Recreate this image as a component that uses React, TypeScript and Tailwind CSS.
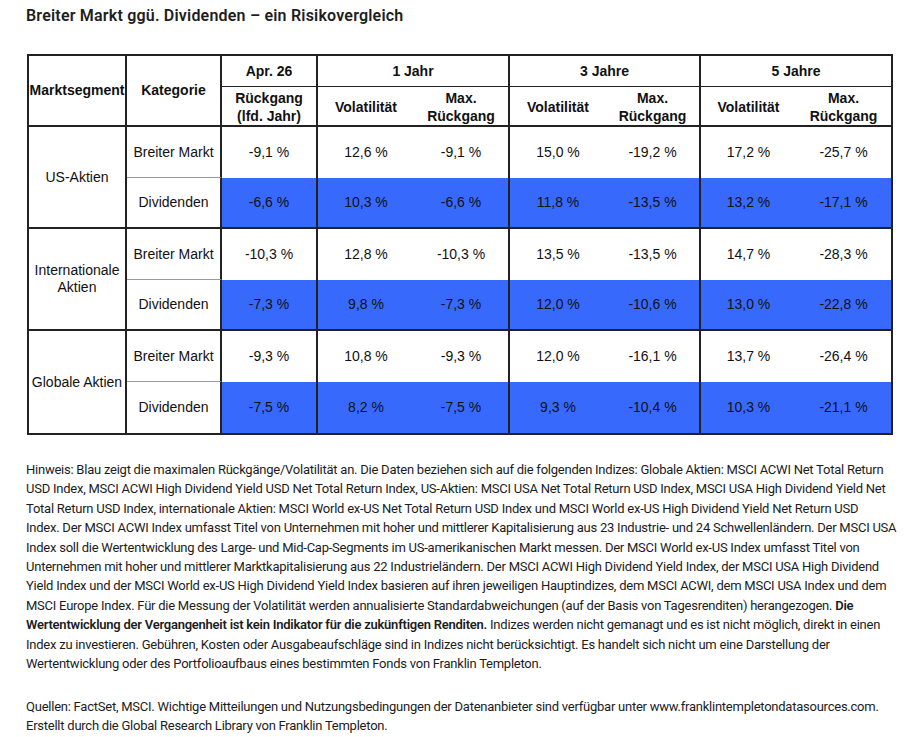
import React from "react";

const BLUE = "bg-[#3869fd]";

type Group = {
  seg: string[];
  breit: string[];
  div: string[];
};

const groups: Group[] = [
  {
    seg: ["US-Aktien"],
    breit: ["-9,1 %", "12,6 %", "-9,1 %", "15,0 %", "-19,2 %", "17,2 %", "-25,7 %"],
    div: ["-6,6 %", "10,3 %", "-6,6 %", "11,8 %", "-13,5 %", "13,2 %", "-17,1 %"],
  },
  {
    seg: ["Internationale", "Aktien"],
    breit: ["-10,3 %", "12,8 %", "-10,3 %", "13,5 %", "-13,5 %", "14,7 %", "-28,3 %"],
    div: ["-7,3 %", "9,8 %", "-7,3 %", "12,0 %", "-10,6 %", "13,0 %", "-22,8 %"],
  },
  {
    seg: ["Globale Aktien"],
    breit: ["-9,3 %", "10,8 %", "-9,3 %", "12,0 %", "-16,1 %", "13,7 %", "-26,4 %"],
    div: ["-7,5 %", "8,2 %", "-7,5 %", "9,3 %", "-10,4 %", "10,3 %", "-21,1 %"],
  },
];

const rightBorder = [true, false, true, false, true, false, false];

function DataCell({ v, i, blue, last }: { v: string; i: number; blue: boolean; last: boolean }) {
  return (
    <div
      className={
        "flex items-center justify-center border-[#222] " +
        (rightBorder[i] ? "border-r-2 " : "") +
        (blue ? BLUE + " " : "bg-white ") +
        (blue && !last ? "border-b-2 " : "")
      }
    >
      {v}
    </div>
  );
}

export default function App() {
  return (
    <div className="w-[904px] h-[737px] bg-white text-[#111] relative overflow-hidden">
      <div className="pl-[26px] pt-[5px] h-[54px]">
        <div
          className="text-[16px] leading-[22px] font-semibold text-[#1e1e1e] tracking-[0.2px]"
          style={{ fontFamily: "Roboto, 'Noto Sans', sans-serif" }}
        >
          Breiter Markt ggü. Dividenden – ein Risikovergleich
        </div>
      </div>

      <div
        className="ml-[27px] w-[866px] border-2 border-[#222] grid grid-cols-[98px_95px_96px_96px_96px_96px_95px_95px_95px] grid-rows-[31px_40px_51px_51px_51px_51px_51px_51px] text-[14px] leading-[17px]"
        style={{ fontFamily: "'Liberation Sans', Arial, sans-serif" }}
      >
        <div className="row-span-2 flex items-center justify-center border-r-2 border-b-2 border-[#222] font-bold">
          Marktsegment
        </div>
        <div className="row-span-2 flex items-center justify-center border-r-2 border-b-2 border-[#222] font-bold">
          Kategorie
        </div>
        <div className="flex items-center justify-center border-r-2 border-b border-[#222] font-bold">Apr. 26</div>
        <div className="col-span-2 flex items-center justify-center border-r-2 border-b border-[#222] font-bold">1 Jahr</div>
        <div className="col-span-2 flex items-center justify-center border-r-2 border-b border-[#222] font-bold">3 Jahre</div>
        <div className="col-span-2 flex items-center justify-center border-b border-[#222] font-bold">5 Jahre</div>

        <div className="flex items-center justify-center text-center leading-[18px] pt-[2px] border-r-2 border-b-2 border-[#222] font-bold">
          Rückgang
          <br />
          (lfd. Jahr)
        </div>
        {[0, 1, 2].map((g) => (
          <React.Fragment key={g}>
            <div className="flex items-center justify-center pt-[2px] border-b-2 border-[#222] font-bold">Volatilität</div>
            <div
              className={
                "flex items-center justify-center text-center leading-[18px] pt-[2px] border-b-2 border-[#222] font-bold " +
                (g < 2 ? "border-r-2" : "")
              }
            >
              Max.
              <br />
              Rückgang
            </div>
          </React.Fragment>
        ))}

        {groups.map((gr, gi) => {
          const last = gi === groups.length - 1;
          return (
            <React.Fragment key={gi}>
              <div
                className={
                  "row-span-2 flex flex-col items-center justify-center text-center border-r-2 border-[#222] " +
                  (last ? "" : "border-b-2")
                }
              >
                {gr.seg.map((s) => (
                  <span key={s}>{s}</span>
                ))}
              </div>
              <div className="flex items-center justify-center border-r-2 border-r-[#222] border-b border-b-[#9a9a9a]">
                Breiter Markt
              </div>
              {gr.breit.map((v, i) => (
                <DataCell key={"b" + i} v={v} i={i} blue={false} last={last} />
              ))}
              <div
                className={
                  "flex items-center justify-center border-r-2 border-[#222] " + (last ? "" : "border-b-2")
                }
              >
                Dividenden
              </div>
              {gr.div.map((v, i) => (
                <DataCell key={"d" + i} v={v} i={i} blue={true} last={last} />
              ))}
            </React.Fragment>
          );
        })}
      </div>

      <div
        className="pl-[26px] pt-[25px] text-[13px] leading-[19.4px] text-[#1c1c1c] tracking-[-0.24px] whitespace-nowrap"
        style={{ fontFamily: "Roboto, 'Noto Sans', sans-serif" }}
      >
        <div>
          Hinweis: Blau zeigt die maximalen Rückgänge/Volatilität an. Die Daten beziehen sich auf die folgenden Indizes: Globale Aktien: MSCI ACWI Net Total Return
        </div>
        <div>
          USD Index, MSCI ACWI High Dividend Yield USD Net Total Return Index, US-Aktien: MSCI USA Net Total Return USD Index, MSCI USA High Dividend Yield Net
        </div>
        <div>
          Total Return USD Index, internationale Aktien: MSCI World ex-US Net Total Return USD Index und MSCI World ex-US High Dividend Yield Net Return USD
        </div>
        <div>
          Index. Der MSCI ACWI Index umfasst Titel von Unternehmen mit hoher und mittlerer Kapitalisierung aus 23 Industrie- und 24 Schwellenländern. Der MSCI USA
        </div>
        <div>
          Index soll die Wertentwicklung des Large- und Mid-Cap-Segments im US-amerikanischen Markt messen. Der MSCI World ex-US Index umfasst Titel von
        </div>
        <div>
          Unternehmen mit hoher und mittlerer Marktkapitalisierung aus 22 Industrieländern. Der MSCI ACWI High Dividend Yield Index, der MSCI USA High Dividend
        </div>
        <div>
          Yield Index und der MSCI World ex-US High Dividend Yield Index basieren auf ihren jeweiligen Hauptindizes, dem MSCI ACWI, dem MSCI USA Index und dem
        </div>
        <div>
          MSCI Europe Index. Für die Messung der Volatilität werden annualisierte Standardabweichungen (auf der Basis von Tagesrenditen) herangezogen.{" "}
          <span className="font-semibold">Die</span>
        </div>
        <div>
          <span className="font-semibold">Wertentwicklung der Vergangenheit ist kein Indikator für die zukünftigen Renditen.</span> Indizes werden nicht gemanagt und es ist nicht möglich, direkt in einen
        </div>
        <div>
          Index zu investieren. Gebühren, Kosten oder Ausgabeaufschläge sind in Indizes nicht berücksichtigt. Es handelt sich nicht um eine Darstellung der
        </div>
        <div>Wertentwicklung oder des Portfolioaufbaus eines bestimmten Fonds von Franklin Templeton.</div>
        <div className="mt-[23.6px]">
          Quellen: FactSet, MSCI. Wichtige Mitteilungen und Nutzungsbedingungen der Datenanbieter sind verfügbar unter www.franklintempletondatasources.com.
        </div>
        <div>Erstellt durch die Global Research Library von Franklin Templeton.</div>
      </div>
    </div>
  );
}
